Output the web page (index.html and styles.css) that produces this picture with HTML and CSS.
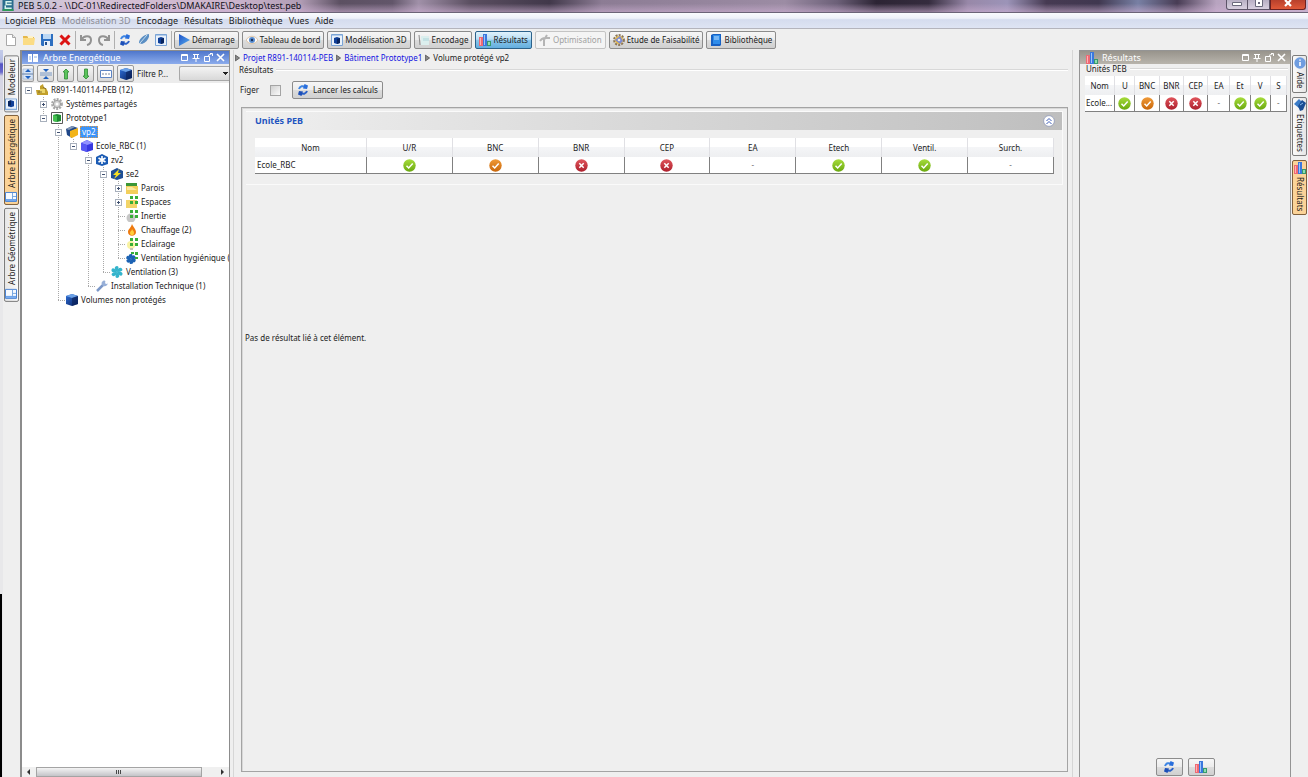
FILE: index.html
```html
<!DOCTYPE html>
<html lang="fr">
<head>
<meta charset="utf-8">
<title>PEB 5.0.2</title>
<link rel="stylesheet" href="styles.css">
</head>
<body>
<svg class="defs" aria-hidden="true">
  <defs>
    <linearGradient id="gGreen" x2="0" y2="1"><stop offset="0" stop-color="#a6dc3c"/><stop offset="1" stop-color="#6aa80e"/></linearGradient>
    <linearGradient id="gOrange" x2="0" y2="1"><stop offset="0" stop-color="#f09a38"/><stop offset="1" stop-color="#c8660a"/></linearGradient>
    <linearGradient id="gRed" x2="0" y2="1"><stop offset="0" stop-color="#e0555c"/><stop offset="1" stop-color="#ad1f2c"/></linearGradient>
    <linearGradient id="gBlue" x2="1" y2="1"><stop offset="0" stop-color="#2f6fd8"/><stop offset="1" stop-color="#061e5c"/></linearGradient>
    <linearGradient id="gPlay" x2="1" y2="1"><stop offset="0" stop-color="#1f52c8"/><stop offset="1" stop-color="#58b0ee"/></linearGradient>
  </defs>
  <symbol id="ok" viewBox="0 0 13 13"><circle cx="6.500" cy="6.500" r="6.200" fill="url(#gGreen)"/><path d="M3.500 6.800l2.200 2.200 4-4.400" fill="none" stroke="#fff" stroke-width="1.500"/></symbol>
  <symbol id="warn" viewBox="0 0 13 13"><circle cx="6.500" cy="6.500" r="6.200" fill="url(#gOrange)"/><path d="M3.500 6.800l2.200 2.200 4-4.400" fill="none" stroke="#fff" stroke-width="1.500"/></symbol>
  <symbol id="bad" viewBox="0 0 13 13"><circle cx="6.500" cy="6.500" r="6.200" fill="url(#gRed)"/><path d="M4.300 4.300l4.400 4.400M8.700 4.300l-4.400 4.400" fill="none" stroke="#fff" stroke-width="1.500"/></symbol>
  <symbol id="new" viewBox="0 0 12 12"><path d="M1.500.5h6l3 3v8h-9z" fill="#fff" stroke="#a8a8a8"/><path d="M7.500.5v3h3" fill="#e8e8e8" stroke="#a8a8a8"/></symbol>
  <symbol id="open" viewBox="0 0 12 12"><path d="M0 2h4l1 1h6v8H0z" fill="#e6b84a"/><path d="M0 4h12l-1 7H0z" fill="#fbdc84"/><path d="M5 2h5v2H5z" fill="#fff3c8"/></symbol>
  <symbol id="save" viewBox="0 0 12 12"><path d="M0 0h12v12H1l-1-1z" fill="#2d6fc0"/><path d="M2 0h8v5H2z" fill="#bcd8f4"/><path d="M3 7h6v5H3z" fill="#e8f0fa"/><path d="M4 8h2v3H4z" fill="#24508c"/></symbol>
  <symbol id="delete" viewBox="0 0 12 12"><path d="M1.500 1.500l9 9M10.500 1.500l-9 9" stroke="#dc1414" stroke-width="3"/></symbol>
  <symbol id="undo" viewBox="0 0 12 12"><path d="M1 1v5h5M1.500 5.500C4 1 11 1 11 6c0 3-2 4.500-4 5" fill="none" stroke="#929292" stroke-width="2"/></symbol>
  <symbol id="redo" viewBox="0 0 12 12"><path d="M11 1v5H6M10.500 5.500C8 1 1 1 1 6c0 3 2 4.500 4 5" fill="none" stroke="#929292" stroke-width="2"/></symbol>
  <symbol id="refresh" viewBox="0 0 12 12"><path d="M2 5C3 2 6 1.500 8.500 3" fill="none" stroke="#3f86e4" stroke-width="2"/><path d="M7.500 0L11 1.500 10 5 6 4.500z" fill="#2a6fdc"/><path d="M10 7c-1 3-4 3.500-6.500 2" fill="none" stroke="#2c62c8" stroke-width="2"/><path d="M4.500 12L1 10.500 2 7l4 .5z" fill="#1c4fb8"/></symbol>
  <symbol id="pen" viewBox="0 0 12 12"><path d="M0 12l2-3C2 5 6 1 12 0c1 3-2 8-7 10l-3-1z" fill="#5b8fc4"/><path d="M3 9L10 1" stroke="#c8def0"/></symbol>
  <symbol id="cube" viewBox="0 0 12 12"><path d="M0 2l6-2 6 2v8l-6 2-6-2z" fill="url(#gBlue)"/><path d="M0 2l6-2 6 2-6 2z" fill="#6aa0e6"/><path d="M6 4l6-2v8l-6 2z" fill="#0a2258" fill-opacity=".6"/></symbol>
  <symbol id="win3d" viewBox="0 0 12 12"><path d="M.5.5h11v11H.5z" fill="#eaf2fb" stroke="#7ba4d6"/><path d="M.5.500h11v1H.5z" fill="#7ba4d6"/><path d="M3 4l3-1 3 1v5l-3 1-3-1z" fill="#0f3f98"/><path d="M6 5l3-1v5l-3 1z" fill="#08245e"/></symbol>
  <symbol id="play" viewBox="0 0 12 12"><path d="M1 0l11 6-11 6z" fill="url(#gPlay)"/></symbol>
  <symbol id="eye" viewBox="0 0 12 12"><path d="M0 6C3 1 9 1 12 6 9 11 3 11 0 6z" fill="#fafbfd" stroke="#d8b890" stroke-width=".8"/><circle cx="6" cy="6" r="3" fill="#5a8ed0"/><circle cx="6" cy="6" r="1.200" fill="#16305e"/></symbol>
  <symbol id="doc" viewBox="0 0 12 12"><path d="M1 1l1 10" stroke="#8c8c8c"/><path d="M3 2h8v9H3z" fill="#dcefee"/><path d="M5 4h6v3H5z" fill="#c4e2e4"/></symbol>
  <symbol id="bars" viewBox="0 0 12 12"><path d="M0 3h4v9H0z" fill="#ee6a74"/><path d="M1 4h1v7H1z" fill="#ffb0b4"/><path d="M4 0h4v12H4z" fill="#3a78de"/><path d="M5 1h1v10H5z" fill="#9cc4fa"/><path d="M8 7h4v5H8z" fill="#389a6c"/><path d="M9 8h2v3H9z" fill="#90dcb0"/></symbol>
  <symbol id="branch" viewBox="0 0 12 12"><path d="M1 7c3-4 5-3 10-3M5 12V6l3-5" fill="none" stroke="#b4b4b4" stroke-width="2"/></symbol>
  <symbol id="gear" viewBox="0 0 12 12"><circle cx="6" cy="6" r="4.800" fill="none" stroke="#a8a8a8" stroke-width="2.200" stroke-dasharray="2 1.100"/><circle cx="6" cy="6" r="3.600" fill="#d2d2d2" stroke="#9c9c9c"/><circle cx="6" cy="6" r="1.500" fill="#fff"/></symbol>
  <symbol id="gears" viewBox="0 0 12 12"><circle cx="6" cy="6" r="4.800" fill="none" stroke="#8a7658" stroke-width="2.200" stroke-dasharray="2 1.100"/><circle cx="6" cy="6" r="4" fill="#e2b84e"/><path d="M2 6l5-4 3 5-3 3z" fill="#7c8ad4"/><circle cx="6" cy="6" r="1.300" fill="#f4ecd2"/></symbol>
  <symbol id="book" viewBox="0 0 12 12"><path d="M1 1l2-1h8v11l-1 1H1z" fill="#1560c4"/><path d="M3 1h7v9H3z" fill="#2e8cea"/><path d="M4 3h5M4 5h5" stroke="#bfe0ff"/></symbol>
  <symbol id="panes" viewBox="0 0 12 12"><path d="M1 2h4v8H1zM6 2h5v8H6z" fill="#fff"/><path d="M2 5h2M2 7h2M7 5h3" stroke="#8cb0e4"/></symbol>
  <symbol id="table" viewBox="0 0 12 12"><path d="M.5 1.500h11v9H.5z" fill="#f6faff" stroke="#4e86d4"/><path d="M1 2h10v2H1z" fill="#6ea4ea"/><path d="M4.500 4v6M1 6.500h3" stroke="#7aa8e0"/></symbol>
  <symbol id="project" viewBox="0 0 12 12"><path d="M0 6h4V2l3-2 1 4h2l2 4v3H1z" fill="#c2a02c"/><path d="M4 5h5v4H4z" fill="#ead468"/><path d="M7 3l3 2M2 8h4" stroke="#84702a"/></symbol>
  <symbol id="building" viewBox="0 0 12 12"><path d="M.5.500h11v11H.5z" fill="#fff" stroke="#585858"/><path d="M2 3l4-1 4 1v6l-4 1-4-1z" fill="#1c8a30"/><path d="M2 3l4 1v6l-4-1z" fill="#44c050"/></symbol>
  <symbol id="volume" viewBox="0 0 12 12"><path d="M0 3l6-3 6 2-6 3v7L1 9z" fill="#1f4688"/><path d="M0 3l6-3 3 1-6 3z" fill="#8498b4"/><path d="M4 5l8-3v7l-6 3-2-1z" fill="#f2b418"/></symbol>
  <symbol id="unit" viewBox="0 0 12 12"><path d="M0 3l6-3 6 3v7l-6 2-6-2z" fill="#3838e0"/><path d="M0 3l6-3 6 3-6 2z" fill="#9292ff"/><path d="M0 3l6 2v7l-6-2z" fill="#5858f4"/></symbol>
  <symbol id="zone" viewBox="0 0 12 12"><path d="M0 3l6-3 6 3v7l-6 2-6-2z" fill="#1b5bb4"/><path d="M6 2v8M2.500 4l7 4M9.500 4l-7 4" stroke="#fff" stroke-width="1.600"/></symbol>
  <symbol id="sector" viewBox="0 0 12 12"><path d="M0 3l6-3 6 3v7l-6 2-6-2z" fill="#205096"/><path d="M8 1L2 7h3l-2 4 7-6H7z" fill="#f8e020"/></symbol>
  <symbol id="walls" viewBox="0 0 12 12"><path d="M0 1h11v3H0z" fill="#3c9636"/><path d="M0 4h12v8H0z" fill="#f2cf5c"/><path d="M1 5h5l5 3H1z" fill="#fbe9a0"/></symbol>
  <symbol id="spaces" viewBox="0 0 12 12"><path d="M0 4h11v8H0z" fill="#f2d468"/><path d="M4 0h3v3H4zM9 0h3v3H9zM4 5h3v3H4zM9 5h3v3H9z" fill="#38ae38"/></symbol>
  <symbol id="inertia" viewBox="0 0 12 12"><circle cx="5" cy="8" r="4.500" fill="#c6c6c6"/><path d="M4 0h3v3H4zM9 0h3v3H9zM4 5h3v3H4zM9 5h3v3H9z" fill="#38ae38"/></symbol>
  <symbol id="light" viewBox="0 0 12 12"><circle cx="5" cy="7" r="4" fill="#f8f2a2"/><path d="M4 10h3v2H4z" fill="#c6c6b0"/><path d="M4 0h3v3H4zM9 0h3v3H9zM4 5h3v3H4zM9 5h3v3H9z" fill="#38ae38"/></symbol>
  <symbol id="flame" viewBox="0 0 12 12"><path d="M6 0c1 3 4 5 4 8 0 5-8 5-8 0 0-3 3-4 4-8z" fill="#ee7a10"/><path d="M6 5c1 2 2 2 2 4 0 3-4 3-4 0 0-2 2-2 2-4z" fill="#ffce3c"/></symbol>
  <symbol id="fan" viewBox="0 0 12 12"><g fill="#34b4cc"><path id="blade" d="M6 6C3 4 3 0 6 0c2 0 2 3 0 6z"/><use href="#blade" transform="rotate(60 6 6)"/><use href="#blade" transform="rotate(120 6 6)"/><use href="#blade" transform="rotate(180 6 6)"/><use href="#blade" transform="rotate(240 6 6)"/><use href="#blade" transform="rotate(300 6 6)"/></g></symbol>
  <symbol id="fan2" viewBox="0 0 12 12"><g fill="#1b62b4"><path id="blade2" d="M5 7C2 5 2 2 5 2c2 0 2 2 0 5z"/><use href="#blade2" transform="rotate(60 5 7)"/><use href="#blade2" transform="rotate(120 5 7)"/><use href="#blade2" transform="rotate(180 5 7)"/><use href="#blade2" transform="rotate(240 5 7)"/><use href="#blade2" transform="rotate(300 5 7)"/></g><path d="M5 0h3v2H5zM9 0h3v3H9zM9 5h3v2H9z" fill="#38ae38"/></symbol>
  <symbol id="wrench" viewBox="0 0 12 12"><path d="M1 11L8 4" stroke="#7c98c8" stroke-width="2.500"/><path d="M7 1c2-1 3 0 2 2l1 1c2 0 2-1 2-2 0 4-3 5-5 4-2-2-2-4 0-5z" fill="#98b0d8"/></symbol>
  <symbol id="expandall" viewBox="0 0 12 12"><path d="M1 1h10v10H1z" fill="#d6e4f6" stroke="#88a4cc" stroke-width=".5"/><path d="M0 6h12" stroke="#6480a8"/><path d="M6 1l3 3H3zM6 11l3-3H3z" fill="#1c60c0"/></symbol>
  <symbol id="collapseall" viewBox="0 0 12 12"><path d="M0 5h12M0 7h12" stroke="#7898c4"/><path d="M6 4l3-3H3zM6 8l3 3H3z" fill="#1c60c0"/></symbol>
  <symbol id="up" viewBox="0 0 12 12"><path d="M6 1l3 3H7.500v7h-3V4H3z" fill="#5cc45c" stroke="#2f8c36" stroke-width=".8"/></symbol>
  <symbol id="down" viewBox="0 0 12 12"><path d="M6 11l3-3H7.500V1h-3v7H3z" fill="#5cc45c" stroke="#2f8c36" stroke-width=".8"/></symbol>
  <symbol id="rename" viewBox="0 0 12 12"><path d="M.5 2.500h11v7H.5z" fill="#fff" stroke="#5c84c4"/><path d="M3 5v2M6 5v2M9 5v2" stroke="#7484a0"/></symbol>
  <symbol id="winctl" viewBox="0 0 44 10"><path d="M.5 1.500h6v6h-6zM0 2.500h7" fill="none" stroke="#fff"/><path d="M12 1.500h6M13.500 1v4M16.500 1v4M11.500 5.500h7M15 6v3" fill="none" stroke="#fff"/><path d="M23.500 3.500h5v5h-5zM27 2.500l4-2M29 .5h2.500v2.500" fill="none" stroke="#fff"/><path d="M36 1l7 7M43 1l-7 7" stroke="#fff" stroke-width="1.600"/></symbol>
  <symbol id="info" viewBox="0 0 12 12"><circle cx="6" cy="6" r="5.700" fill="#6f9de0"/><path d="M6 5v4M6 2.500v1.300" stroke="#fff" stroke-width="1.600"/></symbol>
  <symbol id="tags" viewBox="0 0 12 12"><path d="M0 5l5-5 3 3-3 6z" fill="#3a7cc8"/><path d="M4 7l4-6 4 3-3 7-3 1z" fill="#1a4e94"/><path d="M6 6l3-2" stroke="#8cc0f0"/></symbol>
  <symbol id="arrow" viewBox="0 0 6 8"><path d="M.5.500v7L5.500 4z" fill="#8a8a8a" stroke="#404040" stroke-width=".8"/></symbol>
  <symbol id="logo" viewBox="0 0 12 12"><path d="M0 0h12v12H0z" fill="#2a6c8c"/><path d="M10 2H4v3h6M10 9H3V6" fill="none" stroke="#d8f4ec" stroke-width="1.600"/><path d="M0 10h12v2H0z" fill="#2f9c58"/></symbol>
  <symbol id="chev" viewBox="0 0 12 12"><circle cx="6" cy="6" r="5.400" fill="#fff" stroke="#8d97b8" stroke-width=".8"/><path d="M3.500 6L6 3.500 8.500 6M3.500 9L6 6.500 8.500 9" fill="none" stroke="#3c5cb8"/></symbol>
</svg>

<header class="titlebar">
  <svg class="ic"><use href="#logo"/></svg>
  <h1>PEB 5.0.2 - \\DC-01\RedirectedFolders\DMAKAIRE\Desktop\test.peb</h1>
  <div class="winbtns">
    <button class="wb" aria-label="Réduire"><svg viewBox="0 0 10 8"><path d="M.5 2.500h9v3h-9z" fill="#fff" stroke="#6a6a7c"/></svg></button>
    <button class="wb wb-max" aria-label="Agrandir"><svg viewBox="0 0 10 8"><path d="M1.500 0v6.500h7V0" fill="#fff" stroke="#6a6a7c"/><path d="M4 2h2v2H4z" fill="#6a6a7c"/></svg></button>
    <button class="wb wb-close" aria-label="Fermer"><svg viewBox="0 0 10 8"><path d="M2 0l6 6M8 0L2 6" stroke="#fff" stroke-width="2.200"/></svg></button>
  </div>
</header>

<nav class="menubar" aria-label="Menu">
  <button>Logiciel PEB</button><button disabled>Modélisation 3D</button><button>Encodage</button><button>Résultats</button><button>Bibliothèque</button><button>Vues</button><button>Aide</button>
</nav>

<div class="toolbar" role="toolbar" aria-label="Outils">
  <div class="tools">
    <button aria-label="Nouveau"><svg class="ic"><use href="#new"/></svg></button>
    <button aria-label="Ouvrir"><svg class="ic"><use href="#open"/></svg></button>
    <button aria-label="Enregistrer"><svg class="ic"><use href="#save"/></svg></button>
    <button aria-label="Supprimer"><svg class="ic"><use href="#delete"/></svg></button>
    <i class="sep"></i>
    <button aria-label="Annuler"><svg class="ic"><use href="#undo"/></svg></button>
    <button aria-label="Rétablir"><svg class="ic"><use href="#redo"/></svg></button>
    <i class="sep"></i>
    <button aria-label="Actualiser"><svg class="ic"><use href="#refresh"/></svg></button>
    <button aria-label="Éditer"><svg class="ic"><use href="#pen"/></svg></button>
    <button aria-label="Vue 3D"><svg class="ic"><use href="#win3d"/></svg></button>
    <i class="sep"></i>
  </div>
  <div class="views">
    <button class="btn"><svg class="ic"><use href="#play"/></svg>Démarrage</button>
    <button class="btn"><svg class="ic"><use href="#eye"/></svg>Tableau de bord</button>
    <button class="btn"><svg class="ic"><use href="#win3d"/></svg>Modélisation 3D</button>
    <button class="btn"><svg class="ic"><use href="#doc"/></svg>Encodage</button>
    <button class="btn active" aria-pressed="true"><svg class="ic"><use href="#bars"/></svg>Résultats</button>
    <button class="btn" disabled><svg class="ic"><use href="#branch"/></svg>Optimisation</button>
    <button class="btn"><svg class="ic"><use href="#gears"/></svg>Etude de Faisabilité</button>
    <button class="btn"><svg class="ic"><use href="#book"/></svg>Bibliothèque</button>
  </div>
</div>

<div class="workspace">
  <div class="edge"><i class="edge-top"></i><i class="edge-bottom"></i></div>
  <nav class="dock dock-left" aria-label="Panneaux gauches">
    <button class="tab"><svg class="ic"><use href="#win3d"/></svg>Modeleur</button>
    <button class="tab tab-on"><svg class="ic"><use href="#table"/></svg>Arbre Energétique</button>
    <button class="tab"><svg class="ic"><use href="#table"/></svg>Arbre Géométrique</button>
  </nav>

  <aside class="panel tree-panel">
    <div class="panel-head"><svg class="ic"><use href="#panes"/></svg><h2>Arbre Energétique</h2><svg class="winctl"><use href="#winctl"/></svg></div>
    <div class="tree-tools">
      <button class="sq half" aria-label="Tout déplier"><svg class="ic"><use href="#expandall"/></svg></button>
      <button class="sq" aria-label="Tout replier"><svg class="ic"><use href="#collapseall"/></svg></button>
      <button class="sq" aria-label="Monter"><svg class="ic"><use href="#up"/></svg></button>
      <button class="sq" aria-label="Descendre"><svg class="ic"><use href="#down"/></svg></button>
      <button class="sq" aria-label="Renommer"><svg class="ic"><use href="#rename"/></svg></button>
      <button class="sq" aria-label="Volumes"><svg class="ic"><use href="#cube"/></svg></button>
      <label for="filter">Filtre P...</label>
      <select id="filter"><option></option></select>
    </div>
    <ul class="tree">
      <li><div class="row"><i class="exp"></i><svg class="ic"><use href="#project"/></svg><span>R891-140114-PEB (12)</span></div>
        <ul>
          <li><div class="row"><i class="exp plus"></i><svg class="ic"><use href="#gear"/></svg><span>Systèmes partagés</span></div></li>
          <li><div class="row"><i class="exp"></i><svg class="ic"><use href="#building"/></svg><span>Prototype1</span></div>
            <ul>
              <li><div class="row"><i class="exp"></i><svg class="ic"><use href="#volume"/></svg><span class="sel">vp2</span></div>
                <ul>
                  <li><div class="row"><i class="exp"></i><svg class="ic"><use href="#unit"/></svg><span>Ecole_RBC (1)</span></div>
                    <ul>
                      <li><div class="row"><i class="exp"></i><svg class="ic"><use href="#zone"/></svg><span>zv2</span></div>
                        <ul>
                          <li><div class="row"><i class="exp"></i><svg class="ic"><use href="#sector"/></svg><span>se2</span></div>
                            <ul>
                              <li><div class="row"><i class="exp plus"></i><svg class="ic"><use href="#walls"/></svg><span>Parois</span></div></li>
                              <li><div class="row"><i class="exp plus"></i><svg class="ic"><use href="#spaces"/></svg><span>Espaces</span></div></li>
                              <li><div class="row"><i class="leaf"></i><svg class="ic"><use href="#inertia"/></svg><span>Inertie</span></div></li>
                              <li><div class="row"><i class="leaf"></i><svg class="ic"><use href="#flame"/></svg><span>Chauffage (2)</span></div></li>
                              <li><div class="row"><i class="leaf"></i><svg class="ic"><use href="#light"/></svg><span>Eclairage</span></div></li>
                              <li><div class="row"><i class="leaf"></i><svg class="ic"><use href="#fan2"/></svg><span>Ventilation hygiénique (</span></div></li>
                            </ul>
                          </li>
                          <li><div class="row"><i class="leaf"></i><svg class="ic"><use href="#fan"/></svg><span>Ventilation (3)</span></div></li>
                        </ul>
                      </li>
                      <li><div class="row"><i class="leaf"></i><svg class="ic"><use href="#wrench"/></svg><span>Installation Technique (1)</span></div></li>
                    </ul>
                  </li>
                </ul>
              </li>
              <li><div class="row"><i class="leaf"></i><svg class="ic"><use href="#cube"/></svg><span>Volumes non protégés</span></div></li>
            </ul>
          </li>
        </ul>
      </li>
    </ul>
    <div class="hscroll">
      <svg viewBox="0 0 14 10"><path d="M8 2v6L5 5z" fill="#303030"/></svg>
      <div class="thumb"><i></i></div>
      <svg class="hs-right" viewBox="0 0 14 10"><path d="M6 2v6l3-3z" fill="#303030"/></svg>
    </div>
  </aside>

  <main>
    <nav class="crumbs" aria-label="Fil d'Ariane">
      <svg class="arr"><use href="#arrow"/></svg><a href="#">Projet R891-140114-PEB</a>
      <svg class="arr"><use href="#arrow"/></svg><a href="#">Bâtiment Prototype1</a>
      <svg class="arr"><use href="#arrow"/></svg><span>Volume protégé vp2</span>
    </nav>
    <h2 class="legend">Résultats</h2>
    <div class="actions">
      <label for="freeze">Figer</label><input type="checkbox" id="freeze">
      <button class="btn calc"><svg class="ic"><use href="#refresh"/></svg>Lancer les calculs</button>
    </div>
    <section class="results">
      <div class="group">
        <div class="group-head"><h3>Unités PEB</h3><button aria-label="Replier"><svg class="ic"><use href="#chev"/></svg></button></div>
        <div class="group-body">
          <table class="grid">
            <thead><tr><th class="name">Nom</th><th>U/R</th><th>BNC</th><th>BNR</th><th>CEP</th><th>EA</th><th>Etech</th><th>Ventil.</th><th>Surch.</th></tr></thead>
            <tbody><tr><td class="name">Ecole_RBC</td>
              <td><svg class="st"><use href="#ok"/></svg></td><td><svg class="st"><use href="#warn"/></svg></td><td><svg class="st"><use href="#bad"/></svg></td><td><svg class="st"><use href="#bad"/></svg></td><td>-</td><td><svg class="st"><use href="#ok"/></svg></td><td><svg class="st"><use href="#ok"/></svg></td><td>-</td></tr></tbody>
          </table>
        </div>
      </div>
      <p class="empty">Pas de résultat lié à cet élément.</p>
    </section>
  </main>

  <aside class="panel result-panel">
    <div class="panel-head"><svg class="ic"><use href="#bars"/></svg><h2>Résultats</h2><svg class="winctl"><use href="#winctl"/></svg></div>
    <h3 class="legend">Unités PEB</h3>
    <table class="grid mini">
      <colgroup><col class="c-name"><col class="c-s"><col class="c-l"><col class="c-l"><col class="c-l"><col class="c-m"><col class="c-s"><col class="c-s"><col class="c-s"></colgroup>
      <thead><tr><th>Nom</th><th>U</th><th>BNC</th><th>BNR</th><th>CEP</th><th>EA</th><th>Et</th><th>V</th><th>S</th></tr></thead>
      <tbody><tr><td class="name">Ecole...</td>
        <td><svg class="st"><use href="#ok"/></svg></td><td><svg class="st"><use href="#warn"/></svg></td><td><svg class="st"><use href="#bad"/></svg></td><td><svg class="st"><use href="#bad"/></svg></td><td>-</td><td><svg class="st"><use href="#ok"/></svg></td><td><svg class="st"><use href="#ok"/></svg></td><td>-</td></tr></tbody>
    </table>
    <div class="panel-foot">
      <button class="btn" aria-label="Actualiser"><svg class="ic"><use href="#refresh"/></svg></button>
      <button class="btn" aria-label="Graphique"><svg class="ic"><use href="#bars"/></svg></button>
    </div>
  </aside>

  <nav class="dock dock-right" aria-label="Panneaux droits">
    <button class="tab"><svg class="ic"><use href="#info"/></svg>Aide</button>
    <button class="tab"><svg class="ic"><use href="#tags"/></svg>Etiquettes</button>
    <button class="tab tab-on"><svg class="ic"><use href="#bars"/></svg>Résultats</button>
  </nav>
</div>
</body>
</html>
```
FILE: styles.css
```css
* { box-sizing: border-box; }

body {
  margin: 0;
  height: 100vh;
  display: flex;
  flex-direction: column;
  overflow: hidden;
  background: #efefef;
  color: #1c1c1c;
  font: 8px/12px "Noto Sans", "DejaVu Sans", sans-serif;
}

h1, h2, h3, p, ul { margin: 0; padding: 0; font: inherit; }
ul { list-style: none; }
button { font: inherit; color: inherit; margin: 0; padding: 0; border: 0; background: none; }
.defs { position: absolute; width: 0; height: 0; }
.ic { width: 12px; height: 12px; flex: none; display: block; }

/* Title bar */
.titlebar {
  height: 13px;
  flex: none;
  display: flex;
  align-items: flex-start;
  gap: 4px;
  padding-left: 2px;
  border-bottom: 1px solid #6c6478;
  background:
    linear-gradient(180deg, transparent 30%, rgba(205, 175, 210, .6)),
    linear-gradient(90deg, #bcc4d4 0, #d8c4d8 6%, #cbb4cc 18%, #b09cb4 23%, #5c5062 26%, #62566a 30%, #a090a8 32%, #5a4e60 36%, #41384a 42%, #8c7c94 46%, #9c8ca4 60%, #6c6078 64%, #2c2434 67%, #352c3e 71%, #9888a8 74%, #9c94b8 77%, #463a52 80%, #403850 84%, #7880a4 87%, #483c54 90%, #b8a4c0 93%, #c0b0c8 100%);
}
.titlebar h1 { font-size: 9px; line-height: 12px; height: 12px; color: #101018; flex: 1; white-space: nowrap; }
.titlebar .ic { height: 11px; }
.winbtns { display: flex; padding-right: 2px; }
.wb { width: 22px; height: 10px; display: flex; justify-content: center; border: 1px solid #5c5468; border-top: 0; border-radius: 0 0 0 3px; background: linear-gradient(#b8b0c4, #d8d0e0); }
.wb svg { width: 10px; height: 8px; }
.wb-max { border-left: 0; border-radius: 0; }
.wb-close { width: 36px; border-color: #6c2020; border-radius: 0 0 3px 0; background: linear-gradient(#b8402c, #e05838); }

/* Menu */
.menubar {
  height: 16px;
  flex: none;
  display: flex;
  align-items: center;
  gap: 6px;
  padding-left: 5px;
  border-bottom: 1px solid #b4b4bc;
  background: linear-gradient(#fafbfe 0, #eef1f9 35%, #d5dcee 45%, #dee4f3 100%);
  font-size: 9px;
}
.menubar button:disabled { color: #8c8c94; }

/* Toolbar */
.toolbar { height: 21px; flex: none; display: flex; align-items: center; padding-left: 5px; gap: 4px; }
.tools { display: flex; align-items: center; gap: 6px; }
.tools .sep { width: 1px; height: 18px; background: #b0b0b0; margin: 0 -2px; }
.views { display: flex; gap: 3px; }

.btn {
  height: 18px;
  display: flex;
  align-items: center;
  justify-content: center;
  gap: 2px;
  padding: 0 3px;
  white-space: nowrap;
  border: 1px solid #8c8c8c;
  border-radius: 2px;
  background: linear-gradient(#f6f6f6 0, #ececec 48%, #dcdcdc 52%, #d0d0d0 100%);
}
.btn.active { border-color: #2c628b; background: linear-gradient(#e0f2fc 0, #b8def4 45%, #88c4ea 52%, #64aede 100%); }
.btn:disabled { color: #a0a0a0; border-color: #c4c4c4; background: #f4f4f4; }
.btn.calc { gap: 4px; padding: 0 4px; }

/* Work area */
.workspace { flex: 1; min-height: 0; display: flex; }
.edge { width: 3px; flex: none; display: flex; flex-direction: column; justify-content: space-between; background: #e8e8ea; }
.edge-top { height: 60px; background: linear-gradient(#c4cce8 0, #b4bce4 12px, #5454c4 14px, #6868cc 22px, #d4d4e4 26px, #dcdce4); }
.edge-bottom { width: 2px; height: 183px; background: #000; }

.dock { flex: none; display: flex; flex-direction: column; gap: 3px; padding-top: 5px; }
.dock-left { width: 17px; padding-left: 1px; }
.dock-right { width: 17px; padding-left: 1px; gap: 4px; }
.tab {
  width: 15px;
  display: flex;
  align-items: center;
  gap: 3px;
  padding: 1px 0 3px;
  writing-mode: vertical-rl;
  white-space: nowrap;
  border: 1px solid #7c7c7c;
  border-radius: 2px;
  background: linear-gradient(90deg, #fafafa, #e6e6e6);
}
.dock-left .tab { transform: rotate(180deg); }
.tab-on { background: #fbd398; border-color: #80603c; }

.panel { flex: none; display: flex; flex-direction: column; min-width: 0; }
.panel-head { height: 13px; flex: none; display: flex; align-items: center; gap: 4px; padding: 0 4px 0 5px; color: #fff; }
.panel-head h2 { flex: 1; font-size: 9px; }
.winctl { width: 44px; height: 10px; }

/* Energy tree */
.tree-panel { width: 210px; border: solid #8c8c8c; border-width: 1px 1px 0 2px; }
.tree-panel .panel-head { background: linear-gradient(#4e76cc, #8cacec); }
.tree-tools { height: 19px; flex: none; display: flex; align-items: center; gap: 3px; background: #ececec; }
.sq { width: 17px; height: 17px; flex: none; display: flex; align-items: center; justify-content: center; border: 1px solid #9a9a9a; border-radius: 2px; background: linear-gradient(#f6f6f6, #d8d8d8); }
.sq.half { width: 12px; border-left: 0; overflow: hidden; }
.tree-tools label { flex: 1; white-space: nowrap; }
.tree-tools select {
  width: 50px;
  height: 15px;
  appearance: none;
  border: 1px solid #a8a8a8;
  border-right: 0;
  border-radius: 2px 0 0 2px;
  background: conic-gradient(from 315deg at 50% 100%, #202020 90deg, transparent 0) right 1px center / 6px 3px no-repeat, linear-gradient(#f4f4f4, #d8d8d8);
}

.tree { flex: 1; min-height: 0; overflow: hidden; background: #fff; padding-left: 2px; }
.tree ul { padding-left: 15px; }
.tree li { background: repeating-linear-gradient(#a8a8a8 0 1px, transparent 1px 2px) 4px 0 / 1px 100% no-repeat; }
.tree > li { background: none; }
.tree li:last-child { background-size: 1px 7px; }
.row { height: 14px; display: flex; align-items: center; white-space: nowrap; }
.row span { margin-left: 3px; }
.row .sel { padding: 0 2px; margin-left: 2px; background: #3c94f8; color: #fff; outline: 1px dotted #d89850; outline-offset: -1px; }
.exp { width: 7px; height: 7px; flex: none; margin: 0 4px 0 1px; border: 1px solid #a8b0bc; background: linear-gradient(#405070, #405070) center / 3px 1px no-repeat #fff; }
.exp.plus { background: linear-gradient(#405070, #405070) center / 3px 1px no-repeat, linear-gradient(#405070, #405070) center / 1px 3px no-repeat #fff; }
.leaf { width: 8px; height: 1px; flex: none; margin-left: 4px; background: repeating-linear-gradient(90deg, #a8a8a8 0 1px, transparent 1px 2px); }

.hscroll { height: 10px; flex: none; display: flex; background: #f0f0f0; }
.hscroll svg { width: 14px; height: 10px; flex: none; }
.thumb { width: 80%; display: flex; justify-content: center; align-items: center; border: 1px solid #a4a4a4; background: linear-gradient(#f4f4f4, #c4c4c8); }
.thumb i { width: 6px; height: 4px; background: repeating-linear-gradient(90deg, #484848 0 1px, transparent 1px 2px); }
.hs-right { margin-left: auto; }

/* Results view */
main { flex: 1; min-width: 0; display: flex; flex-direction: column; margin-left: 3px; padding: 2px 4px 5px 5px; border: solid #d6d6d6; border-width: 0 1px; }
.crumbs { display: flex; align-items: center; gap: 3px; white-space: nowrap; margin-left: -4px; }
.crumbs a { color: #1414e0; text-decoration: none; }
.arr { width: 5px; height: 8px; }
.legend { display: flex; align-items: center; gap: 3px; white-space: nowrap; }
.legend::after { content: ""; flex: 1; height: 2px; background: linear-gradient(#d8d8d8 50%, #fff 50%); }
.actions { display: flex; align-items: center; padding: 5px 0 8px 1px; }
.actions input { appearance: none; width: 11px; height: 11px; margin: 0 11px; border: 1px solid #a4a4a4; background: linear-gradient(135deg, #d0d0d0, #fafafa); }
.results { flex: 1; min-height: 0; margin-left: 2px; padding: 3px 4px; border: 1px solid #a4a4a4; box-shadow: inset 1px 1px 0 #d8d8d8; }
.group { border-right: 1px solid #fafafa; border-bottom: 1px solid #fafafa; }
.group-head { height: 19px; display: flex; align-items: center; justify-content: space-between; padding: 0 7px 0 9px; border-top: 1px solid #fafafa; background: linear-gradient(90deg, #f0f0f0 0, #e8e8e8 15%, #c4c4c4 90%, #bebebe 100%); }
.group-head h3 { font-weight: 700; font-size: 9px; color: #1f55c0; }
.group-body { padding: 8px 8px 10px 9px; }

.grid { width: 100%; table-layout: fixed; border-collapse: separate; border-spacing: 0; }
.grid th { height: 19px; padding: 0; font-weight: 400; border-right: 1px solid #e0e0e4; background: linear-gradient(#fff 0, #fff 45%, #f4f5f7 50%, #eeeff1 100%); }
.grid td { height: 17px; padding: 0; text-align: center; color: #707070; background: #fff; border-right: 1px solid #808080; border-bottom: 1px solid #808080; }
.grid th.name { width: 14%; }
.grid td.name { text-align: left; padding-left: 2px; color: inherit; }
.st { width: 13px; height: 13px; display: block; margin: 0 auto; }
.empty { margin-top: 147px; margin-left: -1px; }

/* Results side panel */
.result-panel { width: 212px; margin-left: 6px; border: 1px solid #949494; border-bottom: 0; }
.result-panel .panel-head { background: linear-gradient(#98948c, #b8b4ac); padding-left: 6px; }
.result-panel .legend { margin: -1px 2px 0 6px; }
.grid.mini { width: auto; margin: 1px 3px 0 5px; }
.mini td.name { padding-left: 1px; }
.c-name { width: 15%; }
.c-l { width: 12%; }
.c-m { width: 11%; }
.c-s { width: 10%; }
.panel-foot { margin-top: auto; display: flex; justify-content: center; gap: 5px; padding-bottom: 1px; }
.panel-foot .btn { width: 27px; }
```
